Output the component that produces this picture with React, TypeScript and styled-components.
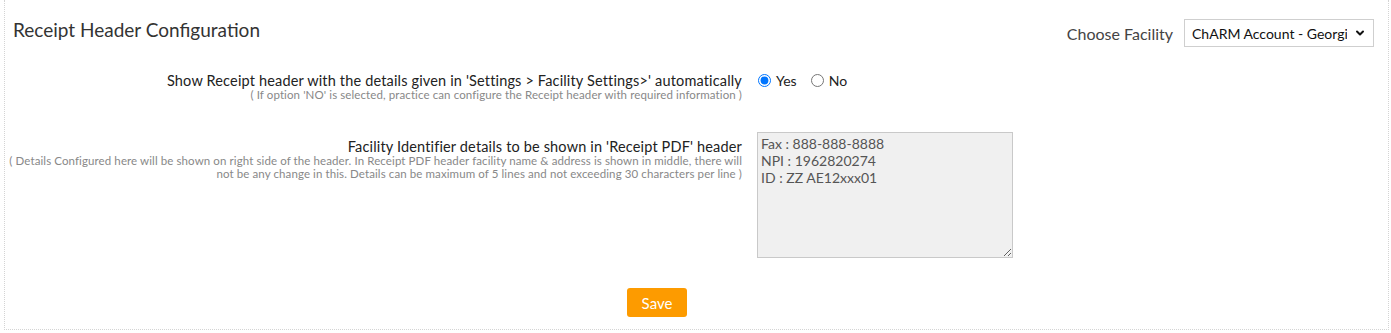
import React, { useState } from 'react';
import styled, { createGlobalStyle } from 'styled-components';
import { ChevronDown } from 'lucide-react';

const GlobalStyle = createGlobalStyle`
  body {
    margin: 0;
    background: #fff;
    font-family: Lato, "Open Sans", Arial, sans-serif;
  }
`;

const Panel = styled.div`
  box-sizing: border-box;
  margin-left: 4px;
  width: 1385px;
  border: 1px dotted #d4d4d4;
  border-top: none;
  padding-bottom: 12px;
`;

const Header = styled.div`
  display: flex;
  justify-content: space-between;
  align-items: flex-start;
  padding: 0 14px 0 8px;
`;

const Title = styled.h2`
  margin: 19px 0 0;
  font-size: 19px;
  font-weight: 400;
  line-height: 22px;
  color: #333;
`;

const FacilityPicker = styled.div`
  display: flex;
  align-items: center;
  gap: 11px;
  margin-top: 19px;
`;

const PickerLabel = styled.span`
  font-size: 16px;
  color: #444;
`;

const SelectWrap = styled.div`
  position: relative;
  width: 190px;
  height: 28px;

  svg {
    position: absolute;
    right: 8px;
    top: 8px;
    pointer-events: none;
  }
`;

const Select = styled.select`
  box-sizing: border-box;
  appearance: none;
  width: 100%;
  height: 100%;
  border: 1px solid #cfcfcf;
  border-radius: 0;
  background: #fff;
  padding: 0 26px 0 7px;
  font-family: Lato, Arial, sans-serif;
  font-size: 14px;
  color: #111;
  outline: none;
`;

const Row = styled.div<{ $top: number }>`
  display: grid;
  grid-template-columns: 737px 1fr;
  column-gap: 15px;
  align-items: start;
  margin-top: ${(p) => p.$top}px;
`;

const LabelCell = styled.div<{ $pad: number }>`
  text-align: right;
  padding-top: ${(p) => p.$pad}px;
`;

const Label = styled.div`
  font-size: 14.5px;
  letter-spacing: 0.16px;
  line-height: 15px;
  color: #222;
  white-space: nowrap;
`;

const Note = styled.div`
  font-size: 11.5px;
  letter-spacing: 0.1px;
  line-height: 13px;
  color: #888;
  white-space: nowrap;
`;

const RadioGroup = styled.div`
  display: flex;
  align-items: center;
  height: 15px;
`;

const RadioOption = styled.label`
  display: flex;
  align-items: center;
  font-size: 14px;
  color: #222;
  margin-right: 13px;

  input {
    margin: 0 5px 0 1px;
    width: 13px;
    height: 13px;
  }
`;

const Details = styled.textarea`
  box-sizing: border-box;
  width: 256px;
  height: 126px;
  background: #f0f0f0;
  border: 1px solid #c9c9c9;
  border-radius: 0;
  padding: 2px 3px;
  font-family: Lato, Arial, sans-serif;
  font-size: 14px;
  line-height: 17px;
  color: #555;
  outline: none;
`;

const Footer = styled.div`
  padding: 30px 0 0 622px;
`;

const SaveButton = styled.button`
  width: 60px;
  height: 29px;
  border: none;
  border-radius: 3px;
  background: #fd9b00;
  color: #fff;
  font-family: Lato, Arial, sans-serif;
  font-size: 15px;
  cursor: pointer;
`;

const App: React.FC = () => {
  const [auto, setAuto] = useState('yes');
  const [details, setDetails] = useState('Fax : 888-888-8888\nNPI : 1962820274\nID : ZZ AE12xxx01');

  return (
    <>
      <GlobalStyle />
      <Panel>
        <Header>
          <Title>Receipt Header Configuration</Title>
          <FacilityPicker>
            <PickerLabel>Choose Facility</PickerLabel>
            <SelectWrap>
              <Select defaultValue="georgia">
                <option value="georgia">ChARM Account - Georgia</option>
              </Select>
              <ChevronDown size={12} strokeWidth={4} color="#111" />
            </SelectWrap>
          </FacilityPicker>
        </Header>

        <Row $top={26}>
          <LabelCell $pad={0}>
            <Label>Show Receipt header with the details given in 'Settings &gt; Facility Settings&gt;' automatically</Label>
            <Note>( If option 'NO' is selected, practice can configure the Receipt header with required information )</Note>
          </LabelCell>
          <RadioGroup>
            <RadioOption>
              <input type="radio" name="auto" checked={auto === 'yes'} onChange={() => setAuto('yes')} />
              Yes
            </RadioOption>
            <RadioOption>
              <input type="radio" name="auto" checked={auto === 'no'} onChange={() => setAuto('no')} />
              No
            </RadioOption>
          </RadioGroup>
        </Row>

        <Row $top={31}>
          <LabelCell $pad={7}>
            <Label>Facility Identifier details to be shown in 'Receipt PDF' header</Label>
            <Note>
              ( Details Configured here will be shown on right side of the header. In Receipt PDF header facility name &amp; address is shown in middle, there will
              <br />
              not be any change in this. Details can be maximum of 5 lines and not exceeding 30 characters per line )
            </Note>
          </LabelCell>
          <Details value={details} onChange={(e) => setDetails(e.target.value)} />
        </Row>

        <Footer>
          <SaveButton type="button">Save</SaveButton>
        </Footer>
      </Panel>
    </>
  );
};

export default App;
